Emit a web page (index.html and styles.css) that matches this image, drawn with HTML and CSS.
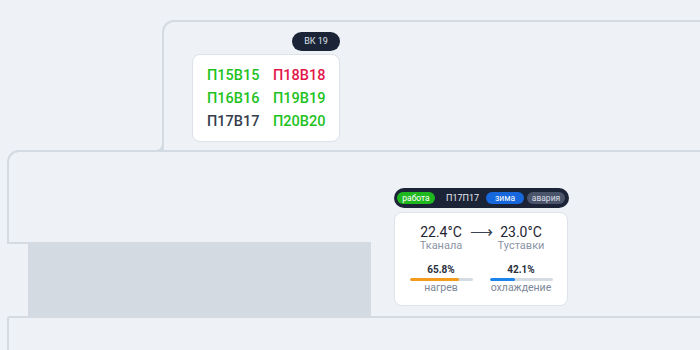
FILE: index.html
```html
<!DOCTYPE html>
<html lang="ru">
<head>
    <meta charset="UTF-8">
    <meta name="viewport" content="width=device-width, initial-scale=1.0">
    <title>Схема вентиляции</title>
    <link rel="stylesheet" href="styles.css">
</head>
<body>
    <div class="plan">
        <!-- верхняя зона: клапаны ВК 19 -->
        <div class="zone zone-top">
            <div class="valve-group">
                <span class="tag">ВК 19</span>
                <div class="valves">
                    <span class="ok">П15В15</span>
                    <span class="alarm">П18В18</span>
                    <span class="ok">П16В16</span>
                    <span class="ok">П19В19</span>
                    <span class="off">П17В17</span>
                    <span class="ok">П20В20</span>
                </div>
            </div>
        </div>

        <!-- средняя зона: установка П17П17 -->
        <div class="zone zone-mid">
            <div class="unit">
                <div class="unit-head">
                    <span class="pill pill-run">работа</span>
                    <span class="unit-name">П17П17</span>
                    <span class="pill pill-mode">зима</span>
                    <span class="pill pill-alarm">авария</span>
                </div>
                <div class="unit-card">
                    <div class="temps">
                        <div class="temp">
                            <div class="temp-value">22.4°C</div>
                            <div class="temp-label">Тканала</div>
                        </div>
                        <div class="arrow"><span>⟶</span></div>
                        <div class="temp">
                            <div class="temp-value">23.0°C</div>
                            <div class="temp-label">Туставки</div>
                        </div>
                    </div>
                    <div class="loads">
                        <div class="load">
                            <div class="load-value">65.8%</div>
                            <div class="bar"><div class="bar-fill heat" style="width: 78%"></div></div>
                            <div class="load-label">нагрев</div>
                        </div>
                        <div class="load">
                            <div class="load-value">42.1%</div>
                            <div class="bar"><div class="bar-fill cool" style="width: 40.5%"></div></div>
                            <div class="load-label">охлаждение</div>
                        </div>
                    </div>
                </div>
            </div>
        </div>
        <div class="mid-bottom">
            <div class="stub"></div>
            <div class="block"></div>
        </div>

        <!-- нижняя зона -->
        <div class="zone zone-low"></div>
    </div>
</body>
</html>
```

FILE: styles.css
```css
body {
    margin: 0;
    background-color: #eef1f5;
    font-family: 'Roboto', 'Liberation Sans', sans-serif;
    overflow: hidden;
    height: 350px;
}

.plan {
    padding-top: 20px;
}

.zone {
    border-top: 2px solid #d3dae2;
    border-left: 2px solid #d3dae2;
    box-sizing: border-box;
}

.zone-top {
    position: relative;
    margin-left: 162px;
    height: 130px;
    border-top-left-radius: 12px;
    padding: 10px 0 0 28px;
}

/* скругление в месте стыка со средней зоной */
.zone-top::before {
    content: '';
    position: absolute;
    left: -10px;
    bottom: -2px;
    width: 8px;
    height: 8px;
    border-right: 2px solid #d3dae2;
    border-bottom: 2px solid #d3dae2;
    border-bottom-right-radius: 8px;
}

.valve-group {
    width: 148px;
    display: flex;
    flex-direction: column;
    align-items: flex-end;
    gap: 3px;
}

.tag {
    width: 48px;
    height: 19px;
    line-height: 19px;
    border-radius: 10px;
    background: #1b2336;
    color: #dfe4ec;
    font-size: 9px;
    text-align: center;
}

.valves {
    width: 148px;
    height: 88px;
    box-sizing: border-box;
    background: white;
    border: 1px solid #dde2e9;
    border-radius: 8px;
    padding: 9px 0 0 14px;
    display: grid;
    grid-template-columns: 66px auto;
    grid-auto-rows: 23px;
    font-size: 14.5px;
    font-weight: 500;
    line-height: 23px;
}

.ok { color: #1ec21e; }
.alarm { color: #e3174a; }
.off { color: #363d4c; }

.zone-mid {
    margin-left: 7px;
    height: 92px;
    border-top-left-radius: 12px;
    padding: 36px 0 0 385px;
}

.unit {
    width: 175px;
}

.unit-head {
    height: 20px;
    box-sizing: border-box;
    background: #1b2336;
    border-radius: 10px;
    padding: 0 3px;
    display: flex;
    align-items: center;
    gap: 3px;
}

.pill {
    width: 38px;
    height: 12px;
    line-height: 12px;
    border-radius: 6px;
    color: white;
    font-size: 8.5px;
    text-align: center;
}

.pill-run { background: #1fb91f; }
.pill-mode { background: #1668dc; }
.pill-alarm { background: #4a556c; color: #d7dce5; }

.unit-name {
    padding: 0 8px;
    color: #e6e9ef;
    font-size: 9px;
    width: 29px;
    text-align: center;
}

.unit-card {
    margin-top: 4px;
    width: 174px;
    height: 94px;
    box-sizing: border-box;
    background: white;
    border: 1px solid #dfe4ea;
    border-radius: 8px;
    padding: 11px 6px 0;
}

.temps, .loads {
    display: flex;
}

.temp, .load {
    width: 80px;
    text-align: center;
}

.temp-value {
    font-size: 14px;
    line-height: 16px;
    color: #1f2633;
}

.temp-label {
    font-size: 11px;
    line-height: 12px;
    color: #8c95a6;
}

.arrow {
    width: 0;
    display: flex;
    justify-content: center;
    font-size: 16px;
    line-height: 16px;
    color: #3a4150;
}

.loads {
    margin-top: 12px;
}

.load-value {
    font-size: 10px;
    font-weight: 700;
    line-height: 12px;
    color: #2a303c;
}

.bar {
    width: 63px;
    height: 3px;
    margin: 2px auto 0;
    background: #d4dbe2;
    border-radius: 2px;
    overflow: hidden;
}

.bar-fill {
    height: 100%;
    border-radius: 2px;
}

.heat { background: #f29b1d; }
.cool { background: #1c84ea; }

.load-label {
    margin-top: 1px;
    font-size: 10.5px;
    line-height: 12px;
    color: #7d8798;
}

.mid-bottom {
    margin-left: 7px;
    height: 74px;
    display: flex;
}

.stub {
    width: 21px;
    border-top: 2px solid #d3dae2;
}

.block {
    width: 343px;
    background: #d3dae2;
}

.zone-low {
    margin-left: 7px;
    height: 34px;
    border-top-left-radius: 3px;
}
```
